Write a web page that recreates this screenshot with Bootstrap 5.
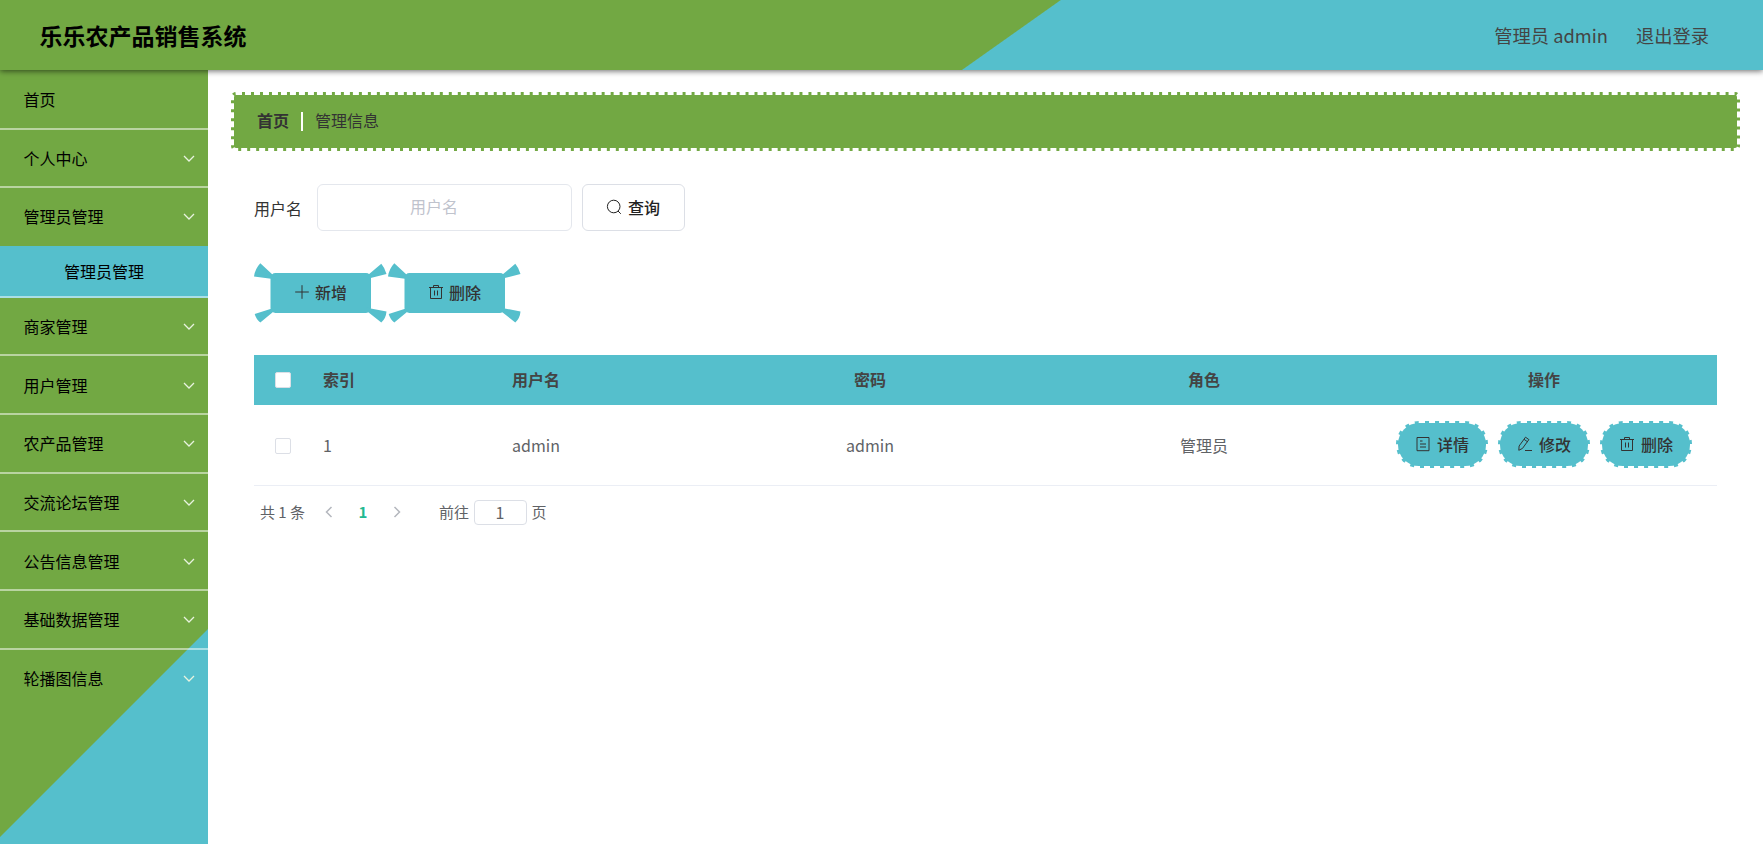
<!DOCTYPE html>
<html lang="zh-CN">
<head>
<meta charset="utf-8">
<title>乐乐农产品销售系统</title>
<link href="https://cdn.jsdelivr.net/npm/bootstrap@5.3.0/dist/css/bootstrap.min.css" rel="stylesheet">
<style>
:root{--green:#72a843;--cyan:#55bfcc}
body{font-family:"Noto Sans CJK SC",sans-serif;font-size:16px;line-height:1.5;color:#333;height:844px;overflow:hidden;background:#fff}
.icon{width:16px;height:16px;fill:none;stroke:currentColor;stroke-width:1;flex:none}
.topbar{height:69.5px;position:relative;z-index:2;box-shadow:0 1px 6px rgba(0,0,0,.6);padding:0 54px 0 39.5px;background:linear-gradient(144.7deg,var(--green) 0 612.5px,var(--cyan) 613.5px)}
.brand-title{font-size:23px;font-weight:700;color:#000}
.user-links{font-size:18.3px;color:#444;gap:28px;padding-top:1px}
.sidebar{width:208px;height:774.5px;padding-top:1.5px;background:linear-gradient(-45deg,var(--cyan) 0 151.5px,var(--green) 152.5px);color:#000;flex:none}
.menu-row{height:58.7px;padding:0 12px 0 23.5px;border-bottom:2px solid rgba(255,255,255,.5)}
.menu-row:last-child,.menu-row.open{border-bottom-color:transparent}
.menu-row.open{height:58px}
.menu-row .icon{width:14px;height:14px;stroke:#e8f3df;stroke-width:1.3}
.submenu{height:51.2px;background:var(--cyan);border-bottom:2px solid rgba(255,255,255,.5)}
.crumbs{margin:22.5px 23px 0;height:59px;border:3px dashed #fff;border-radius:5px;background:var(--green);padding:0 0 3px 23px}
.crumb-bar{width:2px;height:19px;background:#fff;margin:2px 12px 0 12px}
.content-area{padding:33px 46px 0}
.search-label{margin-right:14.5px}
.search-input{width:255px;height:47px;border:1px solid #e4e7ed;border-radius:6px;color:#c0c4cc;text-align:center;padding:0 20px 3px 0}
.search-input::placeholder{color:#bfc3cd}
.search-btn{width:103px;height:47px;border:1px solid #dcdfe6;border-radius:6px;font-weight:500;background:#fff;color:#222;gap:6px;margin-left:10px;padding:0 0 2px}
.tool-row{margin-top:31.5px}
.candy{width:134px;height:62px;position:relative;color:#333;border:0;background:none;gap:5px;padding:0 1px 4px 0;font-weight:500}
.candy .wrap-shape{position:absolute;inset:0;fill:var(--cyan);z-index:-1}
.grid-table{margin-top:30.5px;table-layout:fixed;width:1463px}
.grid-table th{height:50px;background:var(--cyan);padding:0 0 2px;color:#444;text-align:center;vertical-align:middle;border:0}
.grid-table td{height:80px;padding:0;text-align:center;vertical-align:middle;color:#606266;border-bottom:1px solid #ebeef5}
.grid-table .idx{text-align:left;padding-left:11px}
.w-check{width:58px}.w-idx{width:57px}.w-data{width:334px}
.check-box{width:16px;height:16px;border:1px solid #dcdfe6;border-radius:2px;background:#fff;display:block;margin:2px auto 0}
.ops{gap:10px}
.op{width:92px;height:47px;border:2px dashed #fff;border-radius:23px;background:var(--cyan);color:#333;font-weight:500;gap:6px;padding:0 0 2px}
.pager{font-size:15px;color:#606266;padding:14px 0 0 6px}
.pager .icon{width:14px;height:14px;stroke:#b4b7be;stroke-width:1.5}
.total{width:44px}
.prev{margin-left:18px}
.page-now{color:#23b991;width:10px;text-align:center;margin:0 22px}
.page-now+.icon{margin-right:35px}
.jump{width:53px;height:25px;border:1px solid #dcdfe6;border-radius:4px;font-size:16px;line-height:22px;margin:0 5px 0 4.5px}
</style>
</head>
<body>
<svg class="d-none">
<symbol id="down" viewBox="0 0 14 14"><path d="M2 5l5 5 5-5"/></symbol>
<symbol id="left" viewBox="0 0 14 14"><path d="M9.500 2l-5 5 5 5"/></symbol>
<symbol id="right" viewBox="0 0 14 14"><path d="M4.500 2l5 5-5 5"/></symbol>
<symbol id="search" viewBox="0 0 16 16"><circle cx="7.7" cy="7.5" r="6.3"/><path d="M12 12l2.800 2.800"/></symbol>
<symbol id="plus" viewBox="0 0 16 16"><path d="M8 1.200v13.600M1.200 8h13.600"/></symbol>
<symbol id="trash" viewBox="0 0 16 16"><path d="M1 3.500h14M2.500 3.500v11h11v-11M5.500 3.500v-2h5v2M6.500 6.500v5M9.500 6.500v5"/></symbol>
<symbol id="doc" viewBox="0 0 16 16"><path d="M2 1.500h12v13.200H2zM5 5h2.500M5 8h6M5 11h6"/></symbol>
<symbol id="pen" viewBox="0 0 16 16"><path d="M1.800 14.300l.3-4.300L8.500 1.200l3.400 2.400L5.500 12.400zM7 3.300l3.400 2.400M8 14.500h7"/></symbol>
<symbol id="candy" viewBox="0 0 134 62"><rect x="16.5" y="10" width="100.5" height="40" rx="5"/><path d="M19 12L6.300 .3Q1 6 0 13.400L17 15.700 22 18zM114 12L127.300 .7Q131 5 132.500 11L116.700 15 112 17zM16.400 46L.7 51Q2 56 6.300 59.500L19 49 22 44zM116.700 45.500L132.500 48.400Q132 55 127.300 59.500L114 49 112 44z"/></symbol>
</svg>
<header class="topbar d-flex align-items-center justify-content-between">
<div class="brand-title">乐乐农产品销售系统</div>
<div class="user-links d-flex"><span>管理员 admin</span><span>退出登录</span></div>
</header>
<div class="d-flex">
<nav class="sidebar">
<div class="menu-row d-flex align-items-center justify-content-between">首页</div>
<div class="menu-row d-flex align-items-center justify-content-between">个人中心<svg class="icon"><use href="#down"/></svg></div>
<div class="menu-row open d-flex align-items-center justify-content-between">管理员管理<svg class="icon"><use href="#down"/></svg></div>
<div class="submenu d-flex align-items-center justify-content-center">管理员管理</div>
<div class="menu-row d-flex align-items-center justify-content-between">商家管理<svg class="icon"><use href="#down"/></svg></div>
<div class="menu-row d-flex align-items-center justify-content-between">用户管理<svg class="icon"><use href="#down"/></svg></div>
<div class="menu-row d-flex align-items-center justify-content-between">农产品管理<svg class="icon"><use href="#down"/></svg></div>
<div class="menu-row d-flex align-items-center justify-content-between">交流论坛管理<svg class="icon"><use href="#down"/></svg></div>
<div class="menu-row d-flex align-items-center justify-content-between">公告信息管理<svg class="icon"><use href="#down"/></svg></div>
<div class="menu-row d-flex align-items-center justify-content-between">基础数据管理<svg class="icon"><use href="#down"/></svg></div>
<div class="menu-row d-flex align-items-center justify-content-between">轮播图信息<svg class="icon"><use href="#down"/></svg></div>
</nav>
<main class="flex-grow-1">
<div class="crumbs d-flex align-items-center"><b>首页</b><span class="crumb-bar"></span><span>管理信息</span></div>
<div class="content-area">
<div class="d-flex align-items-center"><label class="search-label">用户名</label><input class="search-input" placeholder="用户名"><button class="search-btn d-flex align-items-center justify-content-center"><svg class="icon"><use href="#search"/></svg>查询</button></div>
<div class="tool-row d-flex">
<button class="candy d-flex align-items-center justify-content-center"><svg class="wrap-shape" width="134" height="62"><use href="#candy"/></svg><svg class="icon"><use href="#plus"/></svg>新增</button>
<button class="candy d-flex align-items-center justify-content-center"><svg class="wrap-shape" width="134" height="62"><use href="#candy"/></svg><svg class="icon"><use href="#trash"/></svg>删除</button>
</div>
<table class="grid-table">
<colgroup><col class="w-check"><col class="w-idx"><col class="w-data"><col class="w-data"><col class="w-data"><col></colgroup>
<thead><tr><th><span class="check-box"></span></th><th class="idx">索引</th><th>用户名</th><th>密码</th><th>角色</th><th>操作</th></tr></thead>
<tbody><tr><td><span class="check-box"></span></td><td class="idx">1</td><td>admin</td><td>admin</td><td>管理员</td><td><div class="ops d-flex justify-content-center"><button class="op d-flex align-items-center justify-content-center"><svg class="icon"><use href="#doc"/></svg>详情</button><button class="op d-flex align-items-center justify-content-center"><svg class="icon"><use href="#pen"/></svg>修改</button><button class="op d-flex align-items-center justify-content-center"><svg class="icon"><use href="#trash"/></svg>删除</button></div></td></tr></tbody>
</table>
<div class="pager d-flex align-items-center"><span class="total text-nowrap">共 1 条</span><svg class="icon prev"><use href="#left"/></svg><b class="page-now">1</b><svg class="icon"><use href="#right"/></svg>前往<span class="jump text-center">1</span>页</div>
</div>
</main>
</div>
<script src="https://cdn.jsdelivr.net/npm/bootstrap@5.3.0/dist/js/bootstrap.bundle.min.js"></script>
</body>
</html>
